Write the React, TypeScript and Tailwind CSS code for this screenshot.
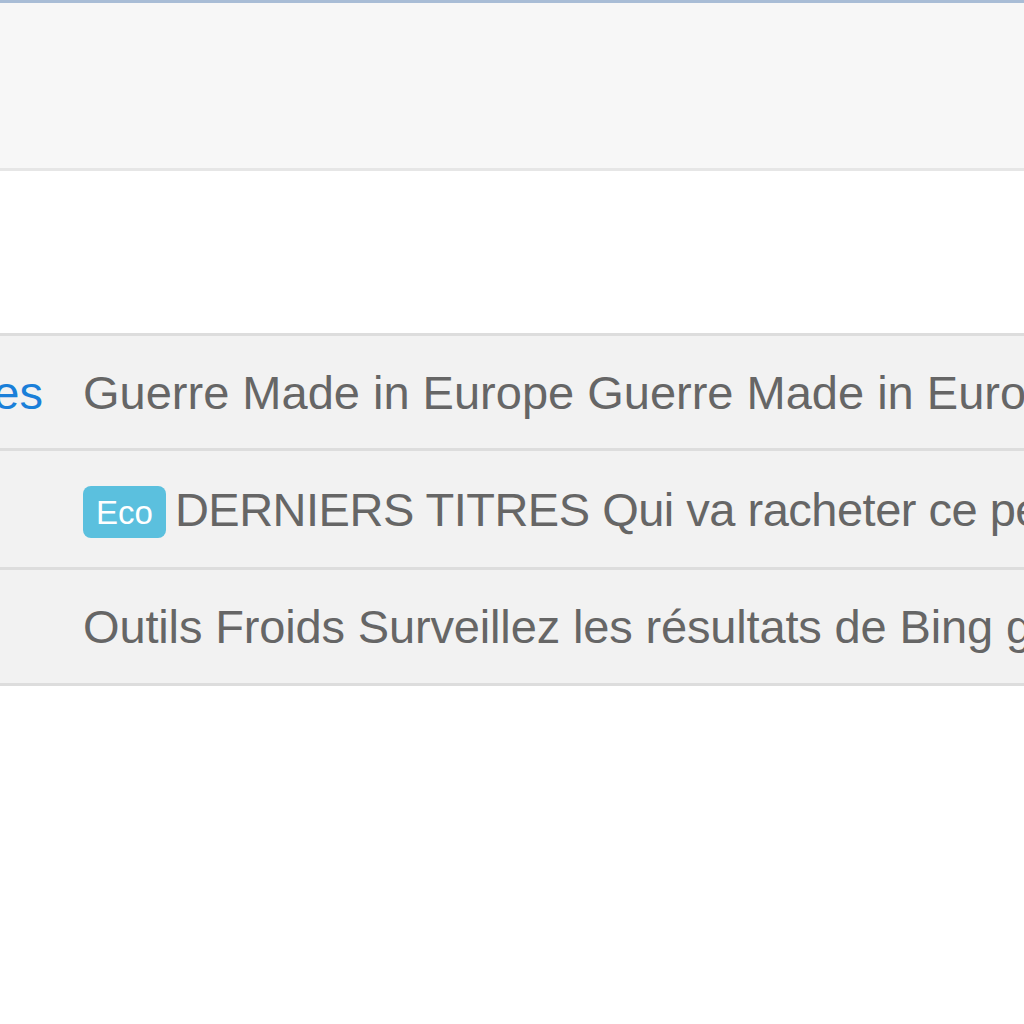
import React from 'react';

const rows = [
  { lead: 'Rubriques', text: 'Guerre Made in Europe Guerre Made in Europe Guerre Made in Europe', height: 'h-[115px]', tracking: 'tracking-normal' },
  { lead: '', badge: 'Eco', text: 'DERNIERS TITRES Qui va racheter ce petit groupe', height: 'h-[119px]', tracking: 'tracking-[-0.5px]' },
  { lead: '', text: 'Outils Froids Surveillez les résultats de Bing gratuitement', height: 'h-[116px]', tracking: 'tracking-[-0.15px]' },
];

const App = () => {
  return (
    <div className="w-[1024px] h-[1024px] overflow-hidden bg-white font-['Liberation_Sans',Arial,sans-serif]">
      {/* header strip */}
      <div className="h-[171px] border-t-[3px] border-b-[3px] border-t-[#a9bdd6] border-b-[#e6e6e6] bg-[#f7f7f7]" />

      <div className="h-[162px]" />

      {/* table */}
      <div className="border-b-[3px] border-[#dddddd]">
        {rows.map((row, i) => (
          <div key={i} className={`flex items-center border-t-[3px] border-[#dddddd] bg-[#f2f2f2] ${row.height}`}>
            <div className="flex w-[63px] shrink-0 justify-end overflow-hidden pr-[20px]">
              <span className="whitespace-nowrap text-[47px] leading-none text-[#1a7fd9]">{row.lead}</span>
            </div>
            <div className="flex items-center whitespace-nowrap pl-[20px] text-[47px] leading-none text-[#666666]">
              {row.badge && (
                <span className="mr-[9px] mt-[6px] flex h-[52px] items-center rounded-[8px] bg-[#5bc0de] px-[13px] text-[33px] text-white">
                  {row.badge}
                </span>
              )}
              <span className={row.tracking}>{row.text}</span>
            </div>
          </div>
        ))}
      </div>
    </div>
  );
};

export default App;
